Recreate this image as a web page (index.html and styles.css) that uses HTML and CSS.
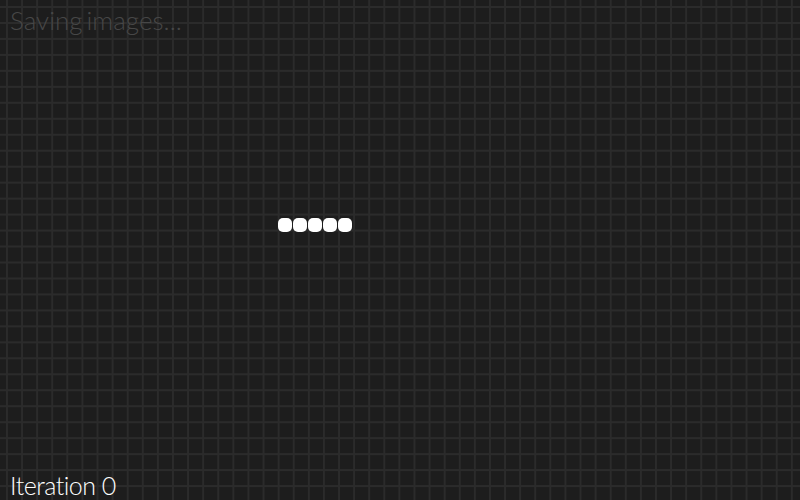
FILE: index.html
```html
<!DOCTYPE html>
<html>
<head>
<meta charset="utf-8">
<link rel="stylesheet" href="styles.css">
</head>
<body>
<div class="screen">
  <div class="status">Saving images...</div>
  <div class="stage">
    <div class="loader">
      <span class="dot"></span><span class="dot"></span><span class="dot"></span><span class="dot"></span><span class="dot"></span>
    </div>
  </div>
  <div class="iteration">Iteration 0</div>
</div>
</body>
</html>
```
FILE: styles.css
```css
html, body {
  margin: 0;
  padding: 0;
  width: 800px;
  height: 500px;
  overflow: hidden;
  background: #1d1d1d;
}
.screen {
  width: 800px;
  height: 500px;
  display: flex;
  flex-direction: column;
  background-color: #1d1d1d;
  background-image:
    linear-gradient(to right, #2b2b2b 0, #2b2b2b 2px, transparent 2px),
    linear-gradient(to bottom, #2b2b2b 0, #2b2b2b 2px, transparent 2px);
  background-size: 15.1px 100%, 100% 15.97px;
  background-position: 6px 0, 0 6px;
  font-family: "Lato", "Noto Sans", sans-serif;
}
.status {
  padding: 5px 0 0 10px;
  height: 31px;
  font-size: 26px;
  line-height: 30px;
  font-weight: 300;
  color: #474747;
  word-spacing: -3px;
}
.stage {
  flex: 1;
  padding: 182px 0 0 278px;
}
.loader {
  display: flex;
  gap: 1px;
}
.dot {
  width: 14px;
  height: 14px;
  border-radius: 5px;
  background: #ffffff;
}
.iteration {
  padding: 0 0 0 10px;
  font-size: 25px;
  line-height: 30px;
  font-weight: 300;
  color: #ffffff;
  letter-spacing: -0.5px;
}
```
